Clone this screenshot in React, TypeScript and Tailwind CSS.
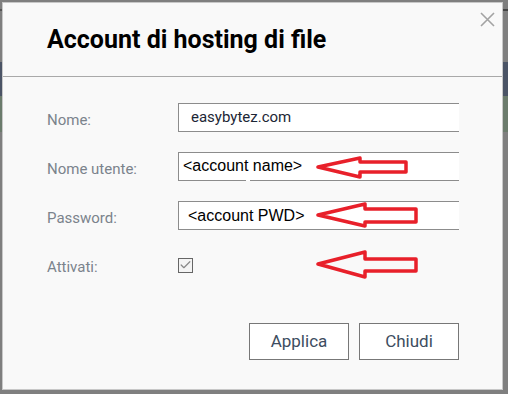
import { Check } from "lucide-react";

const FONT = { fontFamily: "Roboto, 'Noto Sans', sans-serif" };

function Arrow({ className, points }: { className: string; points: string }) {
    return (
        <svg className={`absolute pointer-events-none ${className}`} width="110" height="30" viewBox="0 0 110 30">
            <polygon points={points} fill="none" stroke="#e8202a" strokeWidth="3.5" strokeLinejoin="round" />
        </svg>
    );
}

function Field({ label, children }: { label: string; children: React.ReactNode }) {
    return (
        <div className="flex items-center h-[29px]">
            <div className="w-[131px] pt-[6px] text-[15px] text-[#7b838c]">{label}</div>
            {children}
        </div>
    );
}

export default function App() {
    return (
        <div className="w-[508px] h-[394px] bg-[#7f7f7f] flex overflow-hidden" style={FONT}>
            {/* page peeking through on the left */}
            <div className="w-[2px] flex flex-col">
                <div className="h-[9px]" />
                <div className="h-[2px] bg-[#555]" />
                <div className="h-[51px]" />
                <div className="h-[34px] bg-[#4b5466]" />
                <div className="h-[36px] bg-[#6b7b6c]" />
            </div>

            <div className="mt-[2px] w-[501px] h-[388px] bg-[#f9f9f9] border border-[#c8c8c8] flex flex-col relative">
                <div className="h-[74px] flex items-center pl-[44px] border-b border-[#a9a9a9]">
                    <h1 className="text-[25px] font-bold text-black">Account di hosting di file</h1>
                </div>
                <svg className="absolute left-[477px] top-[9px]" width="15" height="15" viewBox="0 0 15 15">
                    <path d="M1 1 L14 14 M14 1 L1 14" stroke="#a3a3a3" strokeWidth="1.6" />
                </svg>

                <div className="pl-[44px] pt-[26px] flex flex-col gap-[20px]">
                    <Field label="Nome:">
                        <div className="w-[281px] h-[29px] border border-r-0 border-[#8c8c8c] bg-white flex items-center pl-[12px] text-[15px] text-[#1c2635]">
                            easybytez.com
                        </div>
                    </Field>
                    <Field label="Nome utente:">
                        <div className="relative w-[281px] h-[29px] border border-r-0 border-[#8c8c8c] bg-white flex items-center pl-[4px] pb-[2px] text-[16px] text-black" style={{ fontFamily: "'Liberation Sans', Arial, sans-serif" }}>
                            &lt;account name&gt;
                            <div className="absolute left-[67px] -bottom-[1px] w-[4px] h-[2px] bg-white" />
                        </div>
                    </Field>
                    <Field label="Password:">
                        <div className="w-[281px] h-[29px] border border-r-0 border-[#8c8c8c] bg-white flex items-center pl-[9px] text-[16px] text-black" style={{ fontFamily: "'Liberation Sans', Arial, sans-serif" }}>
                            &lt;account PWD&gt;
                        </div>
                    </Field>
                    <Field label="Attivati:">
                        <div className="w-[15px] h-[15px] mt-[1px] border-[1.5px] border-[#666] bg-[#f4f4f4] flex items-center justify-center">
                            <Check size={14} strokeWidth={2.2} className="text-[#888]" />
                        </div>
                    </Field>
                </div>

                <div className="mt-auto mb-[29px] pr-[43px] flex justify-end gap-[10px]">
                    {["Applica", "Chiudi"].map((b) => (
                        <button key={b} className="w-[100px] h-[37px] border border-[#777] bg-white text-[17px] text-[#3d4d5f]">
                            {b}
                        </button>
                    ))}
                </div>

                <Arrow className="left-[313px] top-[152px]" points="2,12 44,3 44,7 90,7 90,17 44,17 44,22" />
                <Arrow className="left-[313px] top-[199px]" points="2,13 49,2 49,7 100,7 100,20 49,20 49,24" />
                <Arrow className="left-[313px] top-[247px]" points="2,14 49,2 49,9 100,9 100,21 49,21 49,27" />
            </div>

            {/* page peeking through on the right */}
            <div className="w-[5px] flex flex-col">
                <div className="h-[9px]" />
                <div className="h-[2px] bg-[#444]" />
                <div className="h-[51px]" />
                <div className="h-[34px] bg-[#4b5466]" />
                <div className="h-[36px] bg-[#6b7b6c]" />
            </div>
        </div>
    );
}
